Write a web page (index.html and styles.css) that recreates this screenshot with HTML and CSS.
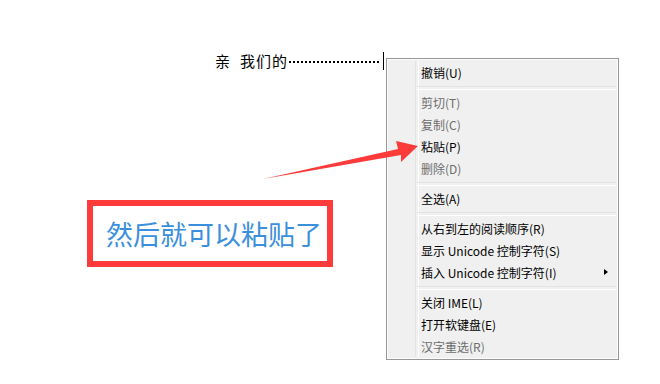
FILE: index.html
```html
<!DOCTYPE html>
<html lang="zh-CN">
<head>
<meta charset="utf-8">
<link rel="stylesheet" href="styles.css">
</head>
<body>
<div class="page">
  <div class="editor">
    <span class="typed first">亲</span><span class="typed">我们的</span><span class="dots"></span><span class="caret"></span>
  </div>

  <div class="callout"><span>然后就可以粘贴了</span></div>

  <ul class="ctx-menu">
    <li class="item">撤销(U)</li>
    <li class="sep"></li>
    <li class="item disabled">剪切(T)</li>
    <li class="item disabled">复制(C)</li>
    <li class="item">粘贴(P)</li>
    <li class="item disabled">删除(D)</li>
    <li class="sep"></li>
    <li class="item">全选(A)</li>
    <li class="sep"></li>
    <li class="item">从右到左的阅读顺序(R)</li>
    <li class="item">显示 Unicode 控制字符(S)</li>
    <li class="item has-sub">插入 Unicode 控制字符(I)<span class="sub-arrow"></span></li>
    <li class="sep"></li>
    <li class="item">关闭 IME(L)</li>
    <li class="item">打开软键盘(E)</li>
    <li class="item disabled">汉字重选(R)</li>
  </ul>

  <svg class="arrow" width="660" height="384" viewBox="0 0 660 384" aria-hidden="true">
    <polygon points="263,179 398,149 396,141 418,146 401,162 401,155" fill="#fd3b3a"/>
  </svg>
</div>
</body>
</html>
```

FILE: styles.css
```css
* { box-sizing: border-box; }
html, body {
  margin: 0;
  padding: 0;
  background: #ffffff;
}
body {
  font-family: "Noto Sans CJK SC", "Noto Sans", sans-serif;
}
.page {
  position: relative;
  width: 660px;
  height: 384px;
  overflow: hidden;
}
.editor {
  display: flex;
  align-items: center;
  height: 18px;
  margin-top: 52px;
  padding-left: 215px;
  font-size: 15px;
  line-height: 18px;
  color: #000;
}
.typed {
  white-space: nowrap;
  letter-spacing: 1px;
}
.typed.first { margin-right: 9px; }
.dots {
  width: 92px;
  height: 2px;
  margin-top: 1px;
  background-image: radial-gradient(circle, #000 0.9px, transparent 1px);
  background-size: 4px 2px;
  background-repeat: repeat-x;
}
.caret {
  width: 1px;
  height: 18px;
  margin-left: 3px;
  background: #000;
}
.callout {
  display: flex;
  align-items: center;
  justify-content: center;
  width: 246px;
  height: 67px;
  margin: 130px 0 0 87px;
  padding-left: 8px;
  border: 6px solid #fd3b3a;
  background: #fff;
  color: #3b8fdc;
  font-size: 27px;
  line-height: 1;
}
.arrow {
  position: absolute;
  left: 0;
  top: 0;
  pointer-events: none;
}
.ctx-menu {
  position: absolute;
  left: 386px;
  top: 58px;
  width: 233px;
  margin: 0;
  padding: 2px 2px;
  list-style: none;
  background: #f0f0f0;
  border: 1px solid #979797;
  box-shadow: inset 1px 1px 0 #fcfcfc, inset -1px -1px 0 #fcfcfc;
  font-size: 12px;
  color: #000;
}
.ctx-menu::before {
  content: "";
  position: absolute;
  left: 28px;
  top: 2px;
  bottom: 2px;
  width: 2px;
  border-left: 1px solid #e2e3e3;
  border-right: 1px solid #ffffff;
}
.item {
  position: relative;
  display: flex;
  align-items: center;
  height: 22px;
  padding-left: 32px;
  white-space: nowrap;
}
.item.disabled { color: #6d6d6d; }
.sep {
  position: relative;
  height: 8px;
}
.sep::after {
  content: "";
  position: absolute;
  left: 28px;
  right: 0;
  top: 3px;
  height: 2px;
  border-top: 1px solid #e2e3e3;
  border-bottom: 1px solid #ffffff;
}
.sub-arrow {
  position: absolute;
  left: 215px;
  top: 8px;
  width: 0;
  height: 0;
  border-top: 3.5px solid transparent;
  border-bottom: 3.5px solid transparent;
  border-left: 4px solid #000;
}
```
